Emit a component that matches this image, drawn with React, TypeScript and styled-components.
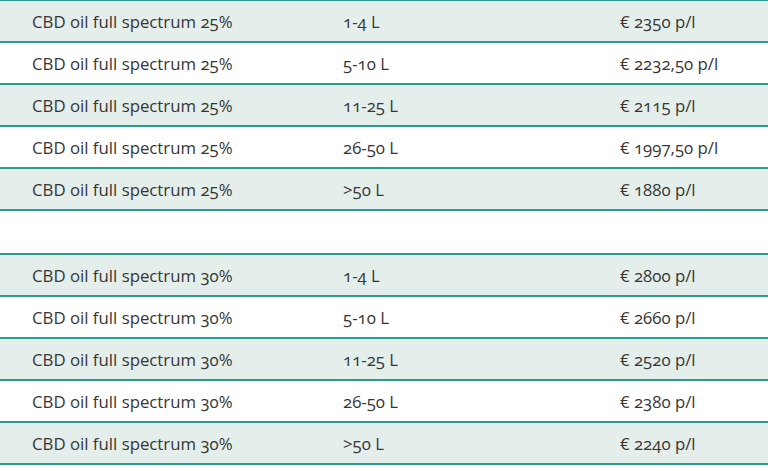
import React from 'react'
import styled, { createGlobalStyle } from 'styled-components'

const GlobalStyle = createGlobalStyle`
  html, body {
    margin: 0;
    padding: 0;
    background: #ffffff;
  }
  body {
    font-family: 'Open Sans', 'Liberation Sans', sans-serif;
    overflow: hidden;
  }
`

const Page = styled.div`
  display: flex;
  flex-direction: column;
  gap: 42px;
  margin-top: -1px;
`

const Table = styled.div`
  display: flex;
  flex-direction: column;
  border-top: 2px solid #2a9d8c;
`

const Row = styled.div<{ $shaded: boolean }>`
  display: grid;
  grid-template-columns: 311px 277px 1fr;
  align-items: center;
  height: 40px;
  padding-left: 32px;
  box-sizing: content-box;
  border-bottom: 2px solid #2a9d8c;
  background: ${p => (p.$shaded ? '#e4eeea' : '#ffffff')};
`

const Cell = styled.div`
  font-size: 16.8px;
  color: #363636;
  white-space: nowrap;
  font-variant-numeric: oldstyle-nums;
`

type Price = { qty: string; price: string }

const tables: { name: string; rows: Price[] }[] = [
  {
    name: 'CBD oil full spectrum 25%',
    rows: [
      { qty: '1-4 L', price: '€ 2350 p/l' },
      { qty: '5-10 L', price: '€ 2232,50 p/l' },
      { qty: '11-25 L', price: '€ 2115 p/l' },
      { qty: '26-50 L', price: '€ 1997,50 p/l' },
      { qty: '>50 L', price: '€ 1880 p/l' },
    ],
  },
  {
    name: 'CBD oil full spectrum 30%',
    rows: [
      { qty: '1-4 L', price: '€ 2800 p/l' },
      { qty: '5-10 L', price: '€ 2660 p/l' },
      { qty: '11-25 L', price: '€ 2520 p/l' },
      { qty: '26-50 L', price: '€ 2380 p/l' },
      { qty: '>50 L', price: '€ 2240 p/l' },
    ],
  },
]

export default function App() {
  return (
    <>
      <GlobalStyle />
      <Page>
        {tables.map(t => (
          <Table key={t.name}>
            {t.rows.map((r, i) => (
              <Row key={r.qty} $shaded={i % 2 === 0}>
                <Cell>{t.name}</Cell>
                <Cell>{r.qty}</Cell>
                <Cell>{r.price}</Cell>
              </Row>
            ))}
          </Table>
        ))}
      </Page>
    </>
  )
}
